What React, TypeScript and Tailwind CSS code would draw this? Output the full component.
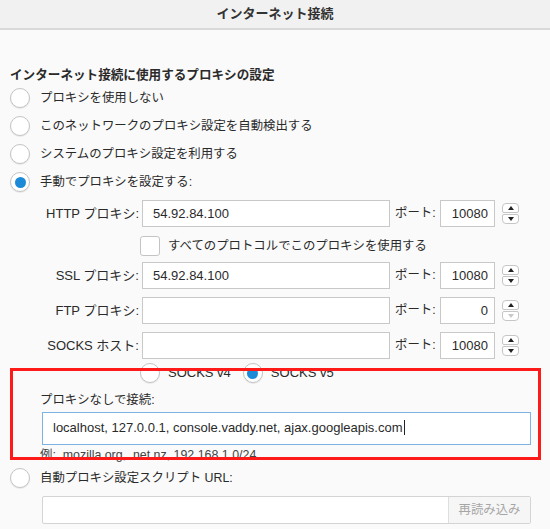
import React from 'react';

const font = { fontFamily: '"Liberation Sans", "Noto Sans CJK JP", sans-serif' };

const Radio: React.FC<{ checked?: boolean }> = ({ checked }) => (
  <span className="flex h-[20px] w-[20px] shrink-0 items-center justify-center rounded-full border border-[#c4c4c4] bg-white shadow-[0_1px_1px_rgba(0,0,0,0.08)]">
    {checked && <span className="h-[11px] w-[11px] rounded-full bg-[#1d8ad8]" />}
  </span>
);

const Stepper: React.FC<{ downDisabled?: boolean }> = ({ downDisabled }) => (
  <div className="ml-[7px] flex flex-col gap-[1px]">
    <div className="flex h-[10px] w-[17px] items-center justify-center rounded-t-[4px] rounded-b-[2px] border border-[#c6c6c6] bg-white">
      <svg width="6" height="4" viewBox="0 0 6 4">
        <path d="M0 4 L3 0 L6 4 Z" fill="#222" />
      </svg>
    </div>
    <div className="flex h-[10px] w-[17px] items-center justify-center rounded-b-[4px] rounded-t-[2px] border border-[#c6c6c6] bg-white">
      <svg width="6" height="4" viewBox="0 0 6 4">
        <path d="M0 0 L3 4 L6 0 Z" fill={downDisabled ? '#c8c8c8' : '#222'} />
      </svg>
    </div>
  </div>
);

const ProxyRow: React.FC<{ label: string; host: string; port: string; downDisabled?: boolean; className?: string }> = ({
  label,
  host,
  port,
  downDisabled,
  className,
}) => (
  <div className={`flex h-[27px] items-center ${className ?? ''}`}>
    <div className="w-[129px] whitespace-nowrap text-right text-[13px]">{label}</div>
    <div className="ml-[3px] flex h-[27px] w-[248px] items-center border border-[#c8c8c8] bg-white pl-[10px] text-[13px]">
      {host}
    </div>
    <div className="ml-[5px] w-[40px] whitespace-nowrap text-[12.4px]">ポート:</div>
    <div className="ml-[5px] flex h-[27px] w-[55px] items-center justify-end border border-[#c8c8c8] bg-white pr-[6px] text-[13px]">
      {port}
    </div>
    <Stepper downDisabled={downDisabled} />
  </div>
);

const App: React.FC = () => {
  return (
    <div className="h-[529px] w-[550px] overflow-hidden bg-[#fafafa] text-[#2a2a2a]" style={font}>
      <div className="flex h-[30px] items-center justify-center border-b-2 border-[#d9d9d9] bg-[#f1f1f1] text-[13px] font-bold text-[#333]">
        インターネット接続
      </div>

      <div className="px-[10px]">
        <div className="mt-[36px] h-[18px] text-[12.6px] font-bold leading-[18px]">インターネット接続に使用するプロキシの設定</div>

        {['プロキシを使用しない', 'このネットワークのプロキシ設定を自動検出する', 'システムのプロキシ設定を利用する', '手動でプロキシを設定する:'].map(
          (text, i) => (
            <div key={text} className="flex h-[28px] items-center gap-[10px]">
              <Radio checked={i === 3} />
              <span className="text-[12.4px]">{text}</span>
            </div>
          )
        )}

        <ProxyRow label="HTTP プロキシ:" host="54.92.84.100" port="10080" className="mt-[4px]" />

        <div className="mt-[9px] flex h-[20px] items-center pl-[130px]">
          <span className="h-[20px] w-[20px] rounded-[3px] border border-[#c4c4c4] bg-white" />
          <span className="ml-[8px] text-[12.4px]">すべてのプロトコルでこのプロキシを使用する</span>
        </div>

        <ProxyRow label="SSL プロキシ:" host="54.92.84.100" port="10080" className="mt-[6px]" />
        <ProxyRow label="FTP プロキシ:" host="" port="0" downDisabled className="mt-[8px]" />
        <ProxyRow label="SOCKS ホスト:" host="" port="10080" className="mt-[8px]" />

        <div className="relative">
          <div className="mt-[4px] flex h-[20px] items-center pl-[130px] text-[13px]">
            <Radio />
            <span className="ml-[8px]">SOCKS v4</span>
            <span className="ml-[12px]">
              <Radio checked />
            </span>
            <span className="ml-[8px]">SOCKS v5</span>
          </div>

          <div className="mt-[8px] h-[18px] pl-[30px] text-[12.4px] leading-[18px]">プロキシなしで接続:</div>
          <div className="ml-[32px] mt-[3px] h-[33px] w-[489px] border border-[#7db3e3] bg-white pl-[10px] pt-[4px] text-[13px] leading-[16px]">
            localhost, 127.0.0.1, console.vaddy.net, ajax.googleapis.com
            <span className="ml-[1px] inline-block h-[15px] w-[1px] translate-y-[3px] bg-[#222]" />
          </div>
          <div className="mt-[2px] h-[16px] pl-[30px] text-[12.4px] leading-[16px] text-[#444]">例: .mozilla.org, .net.nz, 192.168.1.0/24</div>

          <div className="pointer-events-none absolute left-0 top-[5px] h-[92px] w-[531px] border-[3px] border-[#ff1a1a]" />
        </div>

        <div className="mt-[5px] flex h-[20px] items-center gap-[10px]">
          <Radio />
          <span className="text-[12.4px]">自動プロキシ設定スクリプト URL:</span>
        </div>

        <div className="ml-[32px] mt-[8px] flex h-[28px] w-[489px] rounded-[2px] border border-[#d4d4d4] bg-white">
          <div className="flex-1" />
          <div className="flex w-[82px] items-center justify-center border-l border-[#dedede] bg-[#f6f6f6] text-[12.4px] text-[#a6a6a6]">
            再読み込み
          </div>
        </div>
      </div>
    </div>
  );
};

export default App;
